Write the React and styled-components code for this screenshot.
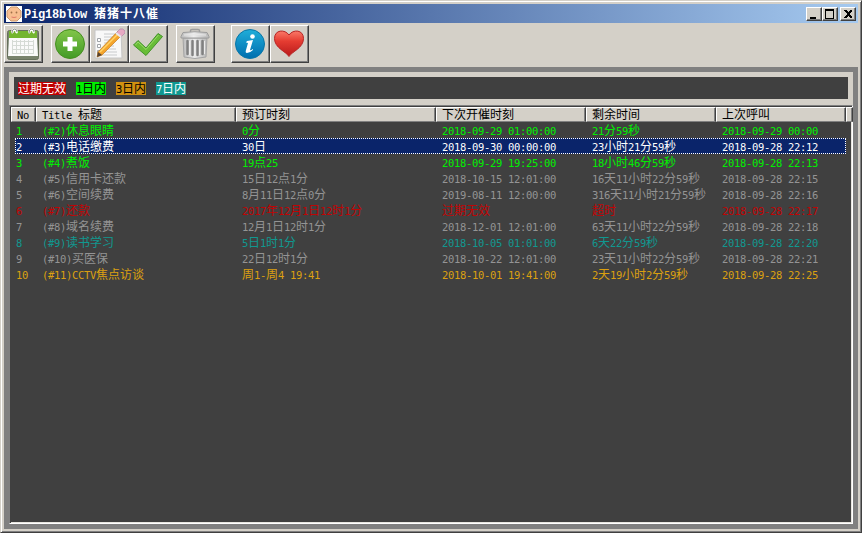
import React from "react";
import styled, { createGlobalStyle } from "styled-components";

const Global = createGlobalStyle`
  * { box-sizing: border-box; }
  body { margin: 0; background: #d4d0c8; overflow: hidden; }
`;

const Window = styled.div`
  width: 862px;
  height: 533px;
  display: flex;
  flex-direction: column;
  padding: 2px;
  background: #d4d0c8;
  border: 1px solid;
  border-color: #d4d0c8 #404040 #404040 #d4d0c8;
  box-shadow: inset 1px 1px #fff, inset -1px -1px #808080;
  font: 12px/16px "Noto Sans CJK SC", sans-serif;
  color: #000;
`;

const TitleBar = styled.header`
  height: 19px;
  flex: none;
  margin: 1px 1px 0;
  padding: 0 2px 0 2px;
  display: flex;
  align-items: center;
  background: linear-gradient(90deg, #0a246a, #a6caf0);
  color: #fff;
`;

const Caption = styled.h1`
  flex: 1;
  margin: 0 0 0 2px;
  font: bold 12px/18px "Noto Sans CJK SC", sans-serif;
  letter-spacing: 1px;
  white-space: pre;
`;

const CaptionLatin = styled.span`
  font-family: "Liberation Mono", monospace;
  letter-spacing: -0.2px;
`;

const Latin = styled.span`
  font-family: "DejaVu Sans Mono", monospace;
  font-size: 10.5px;
  line-height: 1;
  letter-spacing: -0.32px;
`;

const WindowButton = styled.button`
  width: 16px;
  height: 14px;
  padding: 0;
  margin-left: ${(p) => p.$gap || 0}px;
  display: flex;
  background: #d4d0c8;
  border: 1px solid;
  border-color: #fff #404040 #404040 #fff;
  box-shadow: inset -1px -1px #808080;
`;

const ToolBar = styled.nav`
  height: 44px;
  flex: none;
  display: flex;
  padding: 2px 1px 4px;
  border-top: 1px solid #d4d0c8;
`;

const ToolButton = styled.button`
  width: 39px;
  height: 38px;
  margin: -1px ${(p) => p.$after || 0}px 0 0;
  padding: 0;
  display: flex;
  align-items: center;
  justify-content: center;
  background: #d4d0c8;
  border: 1px solid;
  border-color: #fff #404040 #404040 #fff;
  box-shadow: inset -1px -1px #808080;
  svg { display: block; margin: -1px 0 0 -1px; }
`;

const Client = styled.main`
  flex: 1;
  min-height: 0;
  margin: 0 1px 1px;
  border: 5px solid #808080;
  background: #d4d0c8;
  display: flex;
  flex-direction: column;
`;

const Legend = styled.div`
  height: 22px;
  flex: none;
  margin: 5px 5px 6px;
  padding-left: 4px;
  display: flex;
  align-items: center;
  gap: 10px;
  background: #404040;
`;

const Tag = styled.span`
  height: 13px;
  line-height: 12px;
  width: ${(p) => p.$w}px;
  white-space: nowrap;
  background: ${(p) => p.$bg};
  color: ${(p) => p.$fg || "#fff"};
`;

const List = styled.section`
  flex: 1;
  background: #404040;
  border: 1px solid;
  border-color: #808080 #fff #fff #808080;
  box-shadow: inset 1px 1px #404040, inset -1px -1px #e8e6e0;
  padding: 1px;
`;

const HeaderRow = styled.div`
  height: 15px;
  display: grid;
  grid-template-columns: 25px 200px 200px 150px 130px 130px 1fr;
`;

const HeaderCell = styled.div`
  height: 15px;
  padding-left: 5px;
  line-height: 12px;
  white-space: pre;
  background: #d4d0c8;
  border: 1px solid;
  border-color: #fff #404040 #808080 #fff;
  box-shadow: inset -1px 0 #808080;
`;

const Row = styled.div`
  height: 16px;
  margin: 0 5px 0 4px;
  display: grid;
  grid-template-columns: 21px 200px 200px 150px 130px 130px;
  color: ${(p) => p.$color};
  background: ${(p) => (p.$selected ? "#0a246a" : "transparent")};
  outline: ${(p) => (p.$selected ? "1px dotted #fff" : "none")};
  outline-offset: -1px;
`;

const Cell = styled.span`
  height: 16px;
  padding-left: ${(p) => (p.$first ? 1 : 6)}px;
  white-space: pre;
  line-height: 15px;
`;

function Mixed({ text, as: Part = Latin }) {
  return text.split(/([\x20-\x7e]+)/).filter(Boolean).map((run, i) =>
    /^[\x20-\x7e]/.test(run) ? <Part key={i}>{run}</Part> : run
  );
}

const columns = ["No", "Title 标题", "预订时刻", "下次开催时刻", "剩余时间", "上次呼叫"];
const green = "#00f000";
const gray = "#949494";
const rows = [
  [green, "1", "(#2)休息眼睛", "0分", "2018-09-29 01:00:00", "21分59秒", "2018-09-29 00:00"],
  ["#ffffff", "2", "(#3)电话缴费", "30日", "2018-09-30 00:00:00", "23小时21分59秒", "2018-09-28 22:12"],
  [green, "3", "(#4)煮饭", "19点25", "2018-09-29 19:25:00", "18小时46分59秒", "2018-09-28 22:13"],
  [gray, "4", "(#5)信用卡还款", "15日12点1分", "2018-10-15 12:01:00", "16天11小时22分59秒", "2018-09-28 22:15"],
  [gray, "5", "(#6)空间续费", "8月11日12点0分", "2019-08-11 12:00:00", "316天11小时21分59秒", "2018-09-28 22:16"],
  ["#c00404", "6", "(#7)还款", "2017年12月1日12时1分", "过期无效", "超时", "2018-09-28 22:17"],
  [gray, "7", "(#8)域名续费", "12月1日12时1分", "2018-12-01 12:01:00", "63天11小时22分59秒", "2018-09-28 22:18"],
  ["#109890", "8", "(#9)读书学习", "5日1时1分", "2018-10-05 01:01:00", "6天22分59秒", "2018-09-28 22:20"],
  [gray, "9", "(#10)买医保", "22日12时1分", "2018-10-22 12:01:00", "23天11小时22分59秒", "2018-09-28 22:21"],
  ["#dca010", "10", "(#11)CCTV焦点访谈", "周1-周4 19:41", "2018-10-01 19:41:00", "2天19小时2分59秒", "2018-09-28 22:25"],
];

const AppIcon = () => (
  <svg width="16" height="16" viewBox="0 0 16 16">
    <rect width="16" height="16" fill="#fff" />
    <path d="M5 1h6l4 4v6l-4 4H5l-4-4V5z" fill="#f8be90" stroke="#c89870" />
    <circle cx="5.5" cy="6.5" r=".9" fill="#a07048" />
    <circle cx="10.5" cy="6.5" r=".9" fill="#a07048" />
    <path d="M5.500 11q2.500 1 5 0" fill="none" stroke="#e07868" />
  </svg>
);

const CalendarIcon = () => (
  <svg width="32" height="32" viewBox="0 0 32 32">
    <rect x=".5" y="2.5" width="31" height="29" rx="2" fill="#78826c" stroke="#66705c" />
    <path d="M2 3h28v8H2z" fill="#73b52f" />
    <path d="M2 10h28l1 18H1z" fill="#fafafa" />
    <path d="M5 13.500h22M5 17.500h22M5 21.500h22M5 25.500h22M5.500 12v14M9.500 12v14M13.500 12v14M17.500 12v14M21.500 12v14M26.500 12v14" stroke="#d5dad5" />
    <path d="M6 5a2 2 0 1 1 3 0M23 5a2 2 0 1 1 3 0" fill="none" stroke="#fff" strokeWidth="2.500" />
    <path d="M5 5q0-4 2.500-4t2.500 3M22 5q0-4 2.500-4t2.500 3" fill="none" stroke="#8c938c" />
  </svg>
);

const AddIcon = () => (
  <svg width="32" height="32" viewBox="0 0 32 32">
    <defs><linearGradient id="add" x2="0" y2="1"><stop stopColor="#82c64a" /><stop offset="1" stopColor="#439b26" /></linearGradient></defs>
    <circle cx="16" cy="16" r="14.500" fill="url(#add)" stroke="#469020" />
    <path d="M13.500 9h5v4.500H23v5h-4.500V23h-5v-4.500H9v-5h4.500z" fill="#fff" />
  </svg>
);

const EditIcon = () => (
  <svg width="32" height="32" viewBox="0 0 32 32">
    <path d="M2 2h26l1 28H2z" fill="#f8f8f8" stroke="#c6c6c6" />
    <path d="M11 6h13M11 9h11M11 12h11M11 15h10M11 18h10M11 21h12M11 24h13M5 27h19" stroke="#c8cacc" />
    <path d="M4.500 10.500h3v3h-3zM4.500 16.500h3v3h-3zM4.500 22.500h3v3h-3z" fill="#fff" stroke="#a0a4a8" />
    <path d="M5 24L25 3l4 4L9 27l-5 2z" fill="#f5a52c" stroke="#c27a20" strokeWidth=".7" />
    <path d="M7 24L26 5" stroke="#ffd468" strokeWidth="1.500" />
    <path d="M5 24l4 3-5 2z" fill="#554333" />
    <path d="M23 5l4-4q3-1 5 2v2l-4 4z" fill="#e7a9c3" stroke="#a681a2" strokeWidth=".6" />
    <path d="M23 5l5 4" stroke="#e8e8ee" strokeWidth="2" />
  </svg>
);

const CheckIcon = () => (
  <svg width="32" height="32" viewBox="0 0 32 32">
    <path d="M1.500 17L6 12.500l8 7.500L26 5.500l4.500 3L14 27.500z" fill="#68bd36" stroke="#43932b" strokeLinejoin="round" />
    <path d="M3.500 17L6 14l8 7.500L26.500 7" fill="none" stroke="#9ad969" />
  </svg>
);

const TrashIcon = () => (
  <svg width="32" height="32" viewBox="0 0 32 32">
    <defs><linearGradient id="trash"><stop stopColor="#bbb" /><stop offset=".45" stopColor="#ededed" /><stop offset="1" stopColor="#b8b8b8" /></linearGradient></defs>
    <path d="M11.500 4V2.500q0-1 1.500-1h6q1.500 0 1.500 1V4" fill="none" stroke="#9d9d9d" strokeWidth="1.500" />
    <path d="M4 10h24l-1 19q-11 3-22 0z" fill="url(#trash)" stroke="#a4a4a4" />
    <path d="M4 4.500q12-1.500 24 0l2 4v1.500H2V8.500z" fill="url(#trash)" stroke="#9c9c9c" />
    <path d="M8.500 13v13M13.500 13v14M18.500 13v14M23.500 13v13" stroke="#808080" strokeWidth="2.500" strokeLinecap="round" />
    <path d="M10.500 13v14M15.500 13v14M20.500 13v14M25.500 13v13" stroke="#ececec" />
    <path d="M5 7q11-1 22 0" fill="none" stroke="#e8e8e8" />
  </svg>
);

const InfoIcon = () => (
  <svg width="32" height="32" viewBox="0 0 32 32">
    <defs><linearGradient id="info" x2="0" y2="1"><stop stopColor="#20aed9" /><stop offset="1" stopColor="#006eaf" /></linearGradient></defs>
    <circle cx="16" cy="16" r="14.500" fill="url(#info)" stroke="#0a77a8" />
    <circle cx="18.500" cy="8.500" r="2.300" fill="#fff" />
    <path d="M13 13l6-1-3 10q0 1 3-1v1q-3 3-6 3-2 0-1-3l2-7-2-.5z" fill="#fff" />
  </svg>
);

const HeartIcon = () => (
  <svg width="32" height="32" viewBox="0 0 32 32">
    <defs><linearGradient id="heart" x2="0" y2="1"><stop stopColor="#fa7969" /><stop offset=".4" stopColor="#e53c31" /><stop offset="1" stopColor="#b81a1b" /></linearGradient></defs>
    <path d="M16 28.500C13 23.500 1.500 20 1.500 10.500 1.500 1.500 12 1 16 7c4-6 14.500-5.500 14.500 3.500 0 9.500-11.500 13-14.500 18z" fill="url(#heart)" stroke="#b72525" />
  </svg>
);

const tools = [
  ["日历", CalendarIcon, 8], ["添加", AddIcon], ["编辑", EditIcon], ["完成", CheckIcon, 8],
  ["删除", TrashIcon, 16], ["信息", InfoIcon], ["支持", HeartIcon],
];

const controls = [
  ["最小化", "M3 9h6v2H3z"],
  ["最大化", "M2 1h9v10H2zM3 3v7h7V3z"],
  ["关闭", "M3 2h2l2 2 2-2h2v1L8 6l3 3v1H9L7 8l-2 2H3V9l3-3-3-3z", 2],
];

export default function App() {
  return (
    <Window>
      <Global />
      <TitleBar>
        <AppIcon />
        <Caption><Mixed text="Pig18blow 猪猪十八催" as={CaptionLatin} /></Caption>
        {controls.map(([label, path, gap]) => (
          <WindowButton key={label} aria-label={label} $gap={gap}>
            <svg width="14" height="12" viewBox="0 0 14 12"><path d={path} fillRule="evenodd" shapeRendering="crispEdges" /></svg>
          </WindowButton>
        ))}
      </TitleBar>
      <ToolBar>
        {tools.map(([label, Icon, after]) => (
          <ToolButton key={label} aria-label={label} $after={after}><Icon /></ToolButton>
        ))}
      </ToolBar>
      <Client>
        <Legend>
          <Tag $w={48} $bg="#c00000">过期无效</Tag>
          <Tag $w={30} $bg="#00f000" $fg="#000"><Mixed text="1日内" /></Tag>
          <Tag $w={30} $bg="#d09010" $fg="#000"><Mixed text="3日内" /></Tag>
          <Tag $w={30} $bg="#109890"><Mixed text="7日内" /></Tag>
        </Legend>
        <List>
          <HeaderRow>
            {columns.map((name) => <HeaderCell key={name}><Mixed text={name} /></HeaderCell>)}
            <HeaderCell />
          </HeaderRow>
          {rows.map(([color, ...cells]) => (
            <Row key={cells[0]} $color={color} $selected={cells[0] === "2"}>
              {cells.map((text, i) => <Cell key={i} $first={i === 0}><Mixed text={text} /></Cell>)}
            </Row>
          ))}
        </List>
      </Client>
    </Window>
  );
}
